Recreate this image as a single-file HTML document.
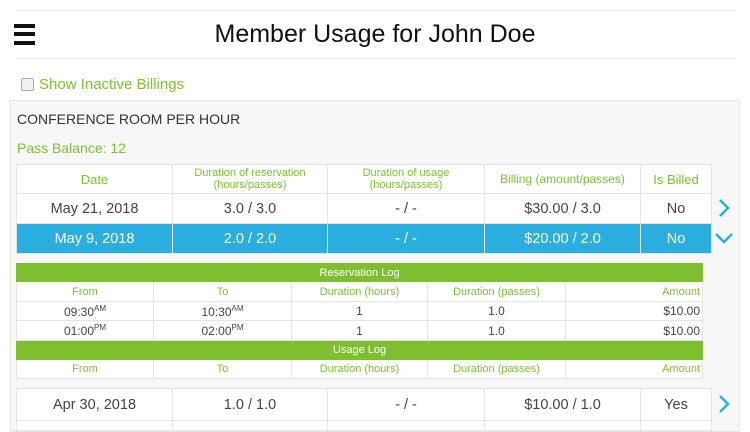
<!DOCTYPE html>
<html><head><style>
body{margin:0;width:750px;height:422px;overflow:hidden;background:#fff;font-family:"Liberation Sans",sans-serif;position:relative}
.a{position:absolute}
table{border-collapse:collapse;position:absolute;table-layout:fixed}
td{border:1px solid #e4e4e4;text-align:center;padding:0;background:#fff;color:#444}
.g{color:#7dbf2e}
sup{font-size:8px}
</style></head><body>
<div class="a" style="left:16px;top:10px;width:720px;height:1px;background:#eee"></div>
<div class="a" style="left:16px;top:58px;width:720px;height:1px;background:#eee"></div>
<div class="a" style="left:14px;top:24px;width:21px;height:4px;background:#111"></div>
<div class="a" style="left:14px;top:32px;width:21px;height:4px;background:#111"></div>
<div class="a" style="left:14px;top:41px;width:21px;height:4px;background:#111"></div>
<div class="a" style="left:0;width:750px;top:20px;text-align:center;font-size:25px;color:#111">Member Usage for John Doe</div>
<div class="a" style="left:21px;top:78px;width:11px;height:11px;border:1px solid #aaa;border-radius:2px;background:#f0f0f0"></div>
<div class="a g" style="left:39px;top:76px;font-size:15px">Show Inactive Billings</div>
<div class="a" style="left:10px;top:100px;width:728px;height:330px;background:#f7f7f7;border:1px solid #e6e6e6"></div>
<div class="a" style="left:17px;top:111px;font-size:14px;color:#333">CONFERENCE ROOM PER HOUR</div>
<div class="a g" style="left:17px;top:140px;font-size:14px">Pass Balance: 12</div>
<table style="left:16px;top:164px;width:695px">
<colgroup><col style="width:156px"><col style="width:155px"><col style="width:157px"><col style="width:156px"><col style="width:71px"></colgroup>
<tr style="height:29px;font-size:11px" class="g"><td class="g" style="font-size:13px">Date</td><td class="g">Duration of reservation<br>(hours/passes)</td><td class="g">Duration of usage<br>(hours/passes)</td><td class="g" style="font-size:12px">Billing (amount/passes)</td><td class="g" style="font-size:13px">Is Billed</td></tr>
<tr style="height:30px;font-size:14.5px"><td>May 21, 2018</td><td>3.0 / 3.0</td><td>- / -</td><td>$30.00 / 3.0</td><td>No</td></tr>
<tr style="height:30px;font-size:14.5px"><td style="background:#2aaee0;color:#fff">May 9, 2018</td><td style="background:#2aaee0;color:#fff">2.0 / 2.0</td><td style="background:#2aaee0;color:#fff">- / -</td><td style="background:#2aaee0;color:#fff">$20.00 / 2.0</td><td style="background:#2aaee0;color:#fff">No</td></tr>
</table>
<table style="left:16px;top:263px;width:686px;font-size:11px">
<colgroup><col style="width:137px"><col style="width:138px"><col style="width:136px"><col style="width:138px"><col style="width:137px"></colgroup>
<tr style="height:18px"><td colspan="5" style="background:#7dbf2e;color:#fff;border-color:#7dbf2e">Reservation Log</td></tr>
<tr style="height:20px"><td class="g">From</td><td class="g">To</td><td class="g">Duration (hours)</td><td class="g">Duration (passes)</td><td class="g" style="text-align:right;padding-right:2px">Amount</td></tr>
<tr style="height:19px;font-size:12px"><td>09:30<sup>AM</sup></td><td>10:30<sup>AM</sup></td><td>1</td><td>1.0</td><td style="text-align:right;padding-right:2px">$10.00</td></tr>
<tr style="height:20px;font-size:12px"><td>01:00<sup>PM</sup></td><td>02:00<sup>PM</sup></td><td>1</td><td>1.0</td><td style="text-align:right;padding-right:2px">$10.00</td></tr>
<tr style="height:19px"><td colspan="5" style="background:#7dbf2e;color:#fff;border-color:#7dbf2e">Usage Log</td></tr>
<tr style="height:19px"><td class="g">From</td><td class="g">To</td><td class="g">Duration (hours)</td><td class="g">Duration (passes)</td><td class="g" style="text-align:right;padding-right:2px">Amount</td></tr>
</table>
<table style="left:16px;top:388px;width:695px;font-size:14.5px">
<colgroup><col style="width:156px"><col style="width:155px"><col style="width:157px"><col style="width:156px"><col style="width:71px"></colgroup>
<tr style="height:32px"><td>Apr 30, 2018</td><td>1.0 / 1.0</td><td>- / -</td><td>$10.00 / 1.0</td><td>Yes</td></tr>
<tr style="height:10px"><td></td><td></td><td></td><td></td><td></td></tr>
</table>
<svg class="a" style="left:716px;top:198px" width="16" height="20"><path d="M4 2 L12 10 L4 18" stroke="#2aaee0" stroke-width="2.5" fill="none"/></svg>
<svg class="a" style="left:714px;top:230px" width="20" height="16"><path d="M2 4 L10 12 L18 4" stroke="#2aaee0" stroke-width="2.5" fill="none"/></svg>
<svg class="a" style="left:716px;top:394px" width="16" height="20"><path d="M4 2 L12 10 L4 18" stroke="#2aaee0" stroke-width="2.5" fill="none"/></svg>
</body></html>
